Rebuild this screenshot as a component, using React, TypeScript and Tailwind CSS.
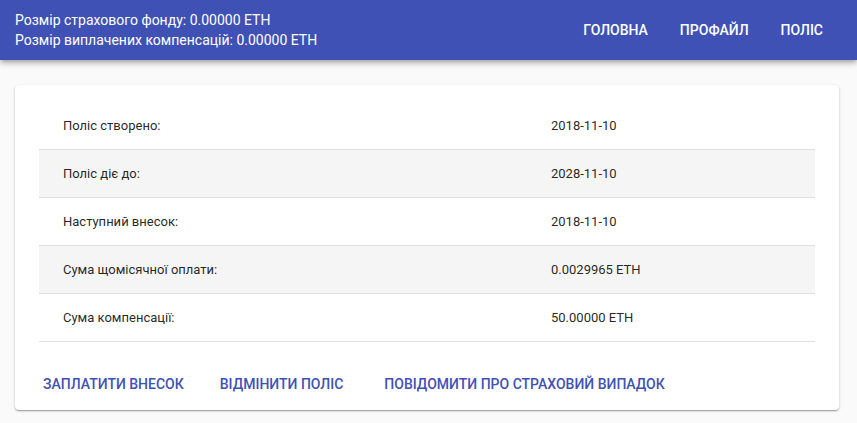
const rows = [
  { label: "Поліс створено:", value: "2018-11-10" },
  { label: "Поліс діє до:", value: "2028-11-10" },
  { label: "Наступний внесок:", value: "2018-11-10" },
  { label: "Сума щомісячної оплати:", value: "0.0029965 ETH" },
  { label: "Сума компенсації:", value: "50.00000 ETH" },
];

const actions = [
  { text: "Заплатити внесок", cls: "" },
  { text: "Відмінити поліс", cls: "ml-1" },
  { text: "Повідомити про страховий випадок", cls: "ml-[9px]" },
];

export default function App() {
  return (
    <div className="min-h-[423px] bg-[#fafafa] font-['Roboto',sans-serif]">
      {/* шапка */}
      <header className="relative z-10 flex h-[60px] items-center justify-between bg-[#3f51b5] pl-[15px] pr-[18px] text-white shadow-[0_2px_4px_-1px_rgba(0,0,0,0.2),0_4px_5px_0_rgba(0,0,0,0.14),0_1px_10px_0_rgba(0,0,0,0.12)]">
        <div className="text-[14px] leading-[20px]">
          <p>Розмір страхового фонду: 0.00000 ETH</p>
          <p>Розмір виплачених компенсацій: 0.00000 ETH</p>
        </div>
        <nav className="flex">
          {["Головна", "Профайл", "Поліс"].map((item) => (
            <button key={item} className="px-4 py-2 text-[14px] font-medium uppercase">
              {item}
            </button>
          ))}
        </nav>
      </header>

      {/* картка поліса */}
      <div className="pl-[15px] pr-[18px] pt-[25px]">
        <div className="rounded-[4px] bg-white shadow-[0_1px_3px_0_rgba(0,0,0,0.2),0_1px_1px_0_rgba(0,0,0,0.14),0_2px_1px_-1px_rgba(0,0,0,0.12)]">
          <div className="px-6 pb-6 pt-[17px]">
            {rows.map((row, i) => (
              <div
                key={row.label}
                className={`grid h-12 grid-cols-[488px_1fr] items-center border-b border-[#e0e0e0] text-[13px] text-[rgba(0,0,0,0.87)] ${
                  i % 2 === 1 ? "bg-[#f5f5f5]" : "bg-white"
                }`}
              >
                <span className="px-6">{row.label}</span>
                <span className="px-6">{row.value}</span>
              </div>
            ))}
          </div>
          <div className="flex pb-2 pl-3">
            {actions.map((a) => (
              <button key={a.text} className={`h-9 px-4 text-[14px] font-medium uppercase text-[#3f51b5] ${a.cls}`}>
                {a.text}
              </button>
            ))}
          </div>
        </div>
      </div>
    </div>
  );
}
